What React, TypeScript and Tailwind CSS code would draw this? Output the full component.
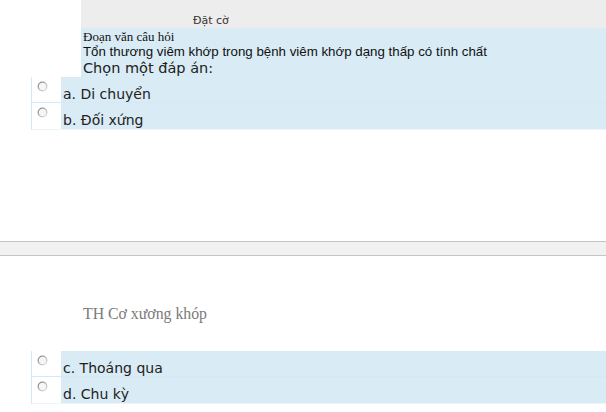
import React from "react";

function Radio() {
  return (
    <svg width="11" height="11" viewBox="0 0 11 11" className="block">
      <defs>
        <linearGradient id="rg" x1="0" y1="0" x2="1" y2="1">
          <stop offset="0" stopColor="#808080" />
          <stop offset="1" stopColor="#e4e4e4" />
        </linearGradient>
      </defs>
      <circle cx="5.5" cy="5.5" r="4.3" fill="#f6f6f6" stroke="url(#rg)" strokeWidth="1.3" />
    </svg>
  );
}

function Option({ label, last }: { label: string; last?: boolean }) {
  return (
    <div className={"flex h-[26px] overflow-hidden " + (last ? "" : "border-b border-[#d6e8f3]")}>
      <div className="w-[29px] bg-white pl-[5px] pt-[4px]">
        <Radio />
      </div>
      <div className="flex-1 bg-[#d9ebf5] pl-[2px] pt-[9px] text-[14px] leading-[16px] text-[#222]" style={{ fontFamily: '"DejaVu Sans", Verdana, sans-serif' }}>
        {label}
      </div>
    </div>
  );
}

export default function App() {
  return (
    <div className="w-[606px] h-[412px] bg-white overflow-hidden">
      <div className="pl-[81px]">
        <div className="h-[28px] bg-[#ededed] pl-[112px] pt-[14px] text-[11px] leading-[13px] text-[#333]" style={{ fontFamily: '"DejaVu Sans", Tahoma, sans-serif' }}>
          Đặt cờ
        </div>
        <div className="h-[49px] bg-[#d9ebf5] pl-[2px] text-[#111]">
          <div className="text-[13px] leading-[15px] pt-[1px]" style={{ fontFamily: '"Liberation Serif", serif' }}>Đoạn văn câu hỏi</div>
          <div className="text-[13.3px] leading-[15px]" style={{ fontFamily: '"Liberation Sans", Arial, sans-serif' }}>Tổn thương viêm khớp trong bệnh viêm khớp dạng thấp có tính chất</div>
          <div className="text-[14.5px] leading-[18px] text-[#222]" style={{ fontFamily: '"DejaVu Sans", Verdana, sans-serif' }}>Chọn một đáp án:</div>
        </div>
      </div>
      <div className="ml-[31px] border-l border-[#d6e8f3] border-b border-b-[#eef5fa]">
        <Option label="a. Di chuyển" />
        <Option label="b. Đối xứng" last />
      </div>
      <div className="h-[111px]" />
      <div className="h-[15px] border-y border-[#c4c4c4] bg-[#f1f1f1]" />
      <div className="h-[49px]" />
      <div className="pl-[83px] text-[15.8px] leading-[18px] text-[#7a7a7a]" style={{ fontFamily: '"Liberation Serif", serif' }}>
        TH Cơ xương khóp
      </div>
      <div className="h-[28px]" />
      <div className="ml-[31px] border-l border-[#d6e8f3] border-b border-b-[#eef5fa]">
        <Option label="c. Thoáng qua" />
        <Option label="d. Chu kỳ" last />
      </div>
    </div>
  );
}
